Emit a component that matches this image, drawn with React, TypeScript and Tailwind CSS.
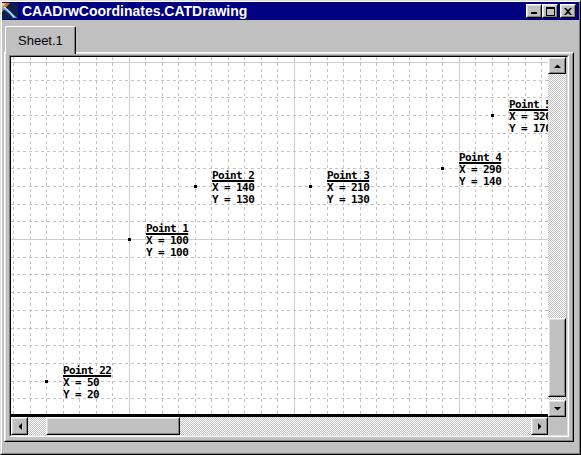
import React from "react";

type PointType = {
    name: string;
    x: number;
    y: number;
};

const points: PointType[] = [
    { name: "Point 1", x: 100, y: 100 },
    { name: "Point 2", x: 140, y: 130 },
    { name: "Point 3", x: 210, y: 130 },
    { name: "Point 4", x: 290, y: 140 },
    { name: "Point 5", x: 320, y: 170 },
    { name: "Point 22", x: 50, y: 20 },
];

// drawing area size
const W = 537;
const H = 357;

// model -> pixel (drawing relative)
const toPx = (x: number) => 117.5 + (x - 100) * 1.65;
const toPy = (y: number) => 182 - (y - 100) * 1.77;

function Raised({ className, inner, children }: { className?: string; inner?: string; children?: React.ReactNode }) {
    return (
        <div className={"bg-[#c0c0c0] border border-t-white border-l-white border-b-black border-r-black " + (className || "")}>
            <div className={"w-full h-full border border-t-[#dfdfdf] border-l-[#dfdfdf] border-b-[#808080] border-r-[#808080] flex items-center justify-center " + (inner || "")}>
                {children}
            </div>
        </div>
    );
}

function Arrow({ dir }: { dir: "up" | "down" | "left" | "right" }) {
    const pts = {
        up: "0,4 7,4 3.5,0.5",
        down: "0,0 7,0 3.5,3.5",
        left: "4,0 4,7 0.5,3.5",
        right: "0,0 0,7 3.5,3.5",
    }[dir];
    const horiz = dir === "left" || dir === "right";
    return (
        <svg width={horiz ? 4 : 7} height={horiz ? 7 : 4} viewBox={horiz ? "0 0 4 7" : "0 0 7 4"}>
            <polygon points={pts} fill="#000" />
        </svg>
    );
}

const dither = "bg-[image:repeating-conic-gradient(#c0c0c0_0_25%,#ffffff_0_50%)] bg-[length:2px_2px]";

function Grid() {
    const lines: React.ReactNode[] = [];
    for (let k = 0; k <= 32; k++) {
        const x = Math.round(2 + k * 16.5) + 0.5;
        const major = (k - 7) % 10 === 0;
        lines.push(
            <line key={"v" + k} x1={x} y1={0} x2={x} y2={H} stroke={major ? "#cccccc" : "#c4c4c4"} strokeDasharray={major ? undefined : "3 3"} />
        );
    }
    for (let k = 0; k <= 20; k++) {
        const y = Math.round(5 + k * 17.7) + 0.5;
        const major = k % 10 === 0;
        lines.push(
            <line key={"h" + k} x1={0} y1={y} x2={W} y2={y} stroke={major ? "#cccccc" : "#c4c4c4"} strokeDasharray={major ? undefined : "3 3"} />
        );
    }
    return (
        <svg width={W} height={H} className="absolute left-0 top-0">
            {lines}
            {points.map((p) => (
                <rect key={p.name} x={Math.round(toPx(p.x)) - 1} y={Math.round(toPy(p.y)) - 1} width={3} height={3} fill="#000" />
            ))}
        </svg>
    );
}

export default function App() {
    return (
        <div className="w-[581px] h-[455px] overflow-hidden bg-[#c0c0c0] border border-t-[#dfdfdf] border-l-[#dfdfdf] border-b-black border-r-black font-['Liberation_Sans',Arial,sans-serif]">
            <div className="w-full h-full flex flex-col border border-t-white border-l-white border-b-[#808080] border-r-[#808080]">

                {/* title bar */}
                <div className="h-[18px] bg-[#000080] flex items-center pr-[3px] shrink-0">
                    <svg width="16" height="16" viewBox="0 0 16 16" className="shrink-0">
                        <rect width="16" height="16" fill="#10204a" />
                        <polygon points="0,0 8,0 0,9" fill="#e07020" />
                        <polygon points="0,0 4,0 0,5" fill="#f8c060" />
                        <path d="M1 3 C5 5, 9 9, 15 15 L11 15 C8 11, 4 7, 0 6 Z" fill="#5aa8e8" />
                        <path d="M2 4 C5 6, 8 9, 12 14" stroke="#ffffff" strokeWidth="1" fill="none" />
                    </svg>
                    <span className="ml-[4px] text-white text-[14px] font-bold leading-none">CAADrwCoordinates.CATDrawing</span>
                    <div className="ml-auto flex items-center">
                        <Raised className="w-4 h-[14px]" inner="items-end justify-start pl-[3px] pb-[2px]">
                            <div className="w-[6px] h-[2px] bg-black" />
                        </Raised>
                        <Raised className="w-4 h-[14px]">
                            <div className="w-[9px] h-[9px] border border-black border-t-2" />
                        </Raised>
                        <Raised className="w-4 h-[14px] ml-[2px]">
                            <svg width="8" height="7" viewBox="0 0 8 7">
                                <path d="M0 0h2l2 2 2-2h2L5 3.5 8 7H6L4 5 2 7H0l3-3.5z" fill="#000" />
                            </svg>
                        </Raised>
                    </div>
                </div>

                {/* tab strip */}
                <div className="pt-[6px] pl-[3px] flex shrink-0">
                    <div className="relative z-10 -mb-[2px] h-[28px] w-[71px] bg-[#c0c0c0] border-t border-l border-white rounded-tl-[2px] rounded-tr-[2px] border-r border-r-black">
                        <div className="h-full border-r border-[#808080] pl-[12px] pt-[6px] text-[13px] leading-[16px] text-black">Sheet.1</div>
                    </div>
                </div>

                {/* tab panel */}
                <div className="ml-[2px] mr-[5px] border border-t-white border-l-white border-b-black border-r-black">
                    <div className="border border-t-[#dfdfdf] border-l-[#dfdfdf] border-b-[#808080] border-r-[#808080] pt-[1px] px-[3px] pb-[3px]">
                        <div className="border border-t-[#808080] border-l-[#808080] border-b-white border-r-white">
                            <div className="border border-t-black border-l-black border-b-[#dfdfdf] border-r-[#dfdfdf] flex">

                                <div className="w-[537px] flex flex-col">
                                    {/* drawing */}
                                    <div className="relative w-[537px] h-[357px] bg-white overflow-hidden">
                                        <Grid />
                                        {points.map((p) => (
                                            <div
                                                key={p.name}
                                                className="absolute font-['DejaVu_Sans_Mono',monospace] font-bold text-[11px] tracking-[-0.6px] leading-[12px] text-black whitespace-pre"
                                                style={{ left: Math.round(toPx(p.x)) + 17, top: Math.round(toPy(p.y)) - 16 }}
                                            >
                                                <div><span className="underline decoration-2 underline-offset-[1px]">{p.name}</span></div>
                                                <div>X = {p.x}</div>
                                                <div>Y = {p.y}</div>
                                            </div>
                                        ))}
                                    </div>
                                    <div className="h-[3px] bg-black" />
                                    {/* horizontal scrollbar */}
                                    <div className={"h-[18px] flex " + dither}>
                                        <Raised className="w-[17px] h-full"><Arrow dir="left" /></Raised>
                                        <Raised className="ml-[18px] w-[134px] h-full" />
                                        <div className="flex-1" />
                                        <Raised className="w-[17px] h-full"><Arrow dir="right" /></Raised>
                                    </div>
                                </div>

                                <div className="w-[18px] flex flex-col">
                                    {/* vertical scrollbar */}
                                    <div className={"h-[360px] flex flex-col " + dither}>
                                        <Raised className="h-[17px] w-full"><Arrow dir="up" /></Raised>
                                        <div className="flex-1" />
                                        <Raised className="h-[79px] w-full" />
                                        <div className="h-[3px]" />
                                        <Raised className="h-[17px] w-full"><Arrow dir="down" /></Raised>
                                    </div>
                                    <div className="h-[18px] bg-[#c0c0c0]" />
                                </div>

                            </div>
                        </div>
                    </div>
                </div>
            </div>
        </div>
    );
}
